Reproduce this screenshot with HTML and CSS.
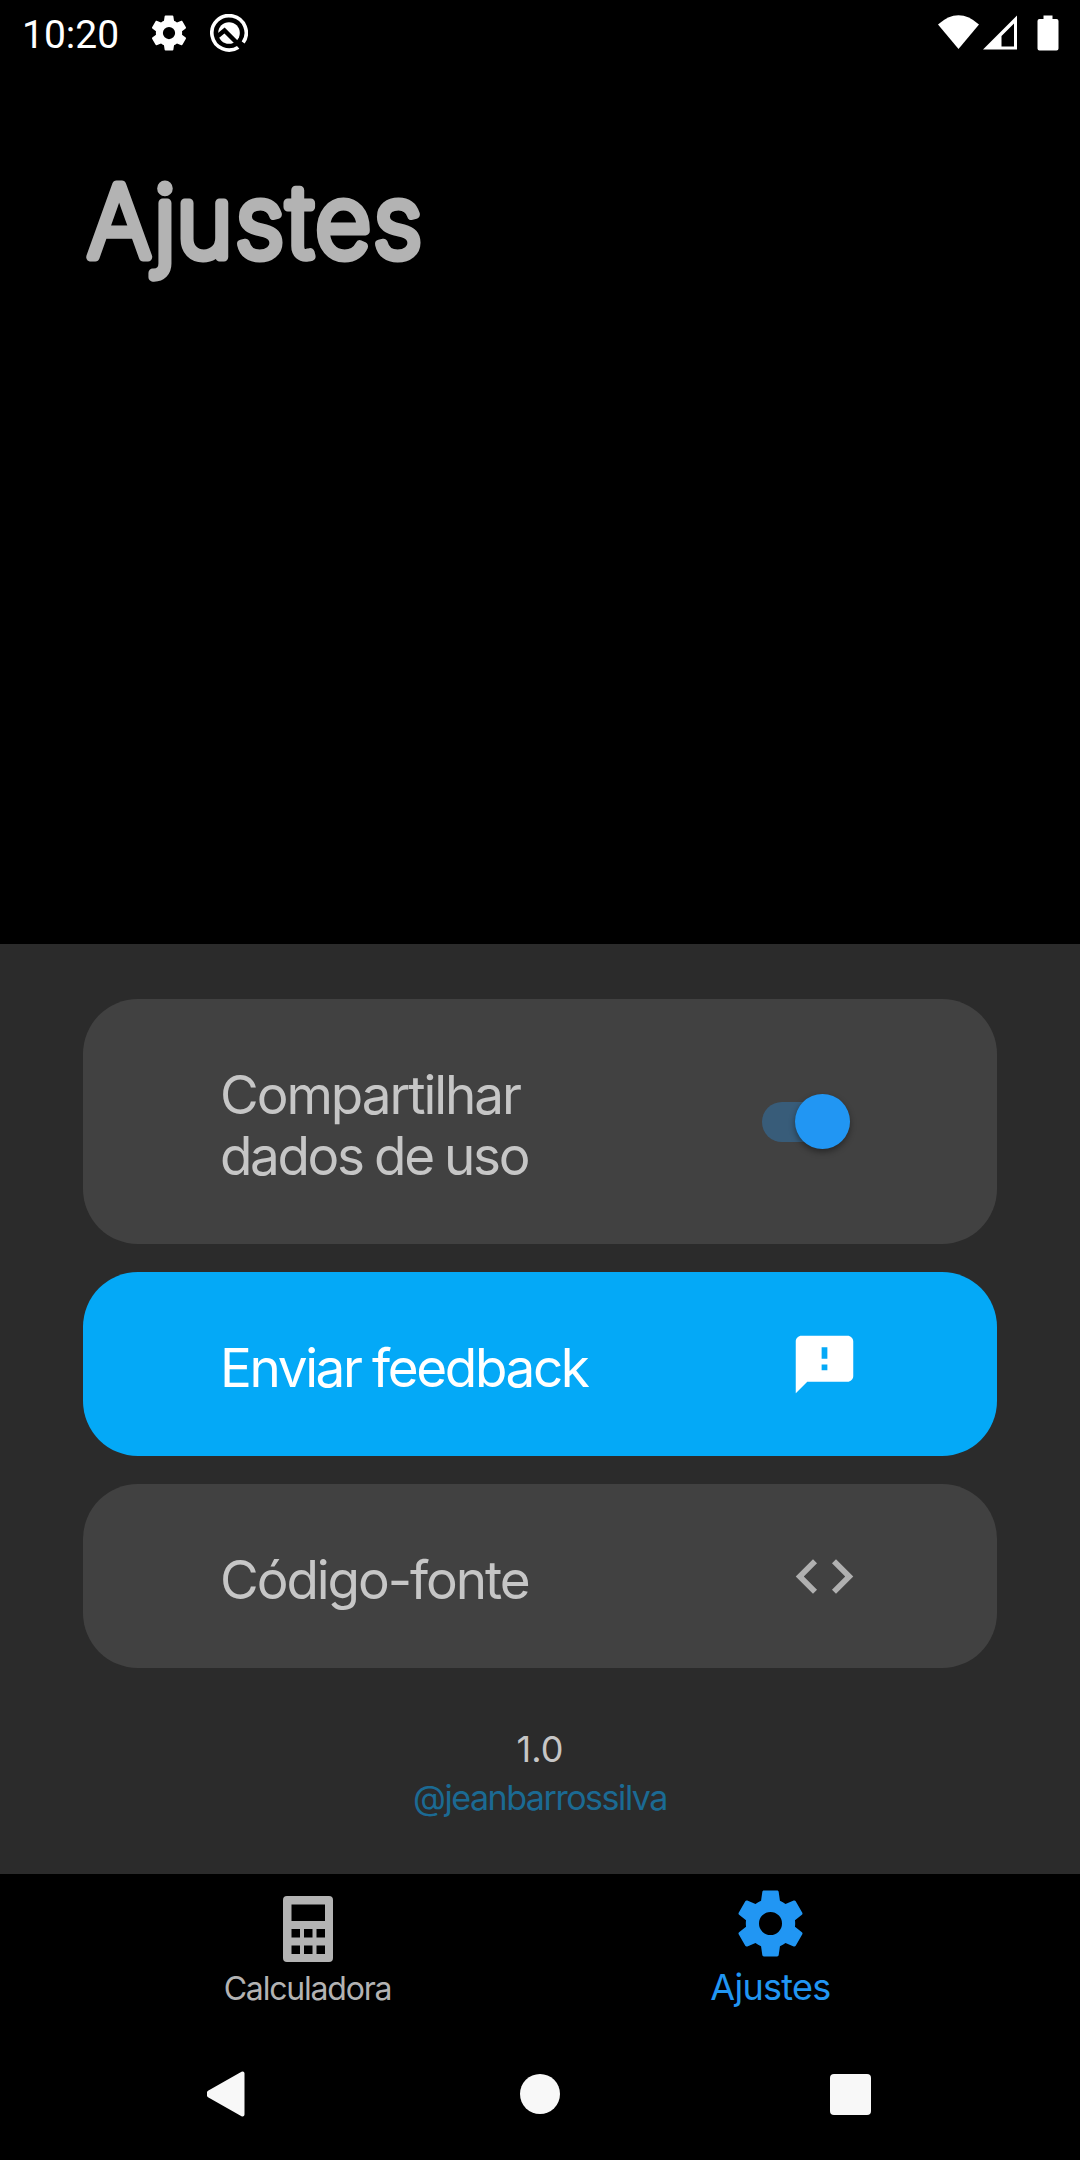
FILE: index.html
```html
<!DOCTYPE html>
<html lang="pt-BR">
<head>
<meta charset="utf-8">
<title>Ajustes</title>
<link rel="stylesheet" href="styles.css">
</head>
<body>
<div class="screen">
  <header class="status">
    <span class="clock">10:20</span>
    <svg class="status-gear" viewBox="0 0 24 24"><path fill-rule="evenodd" d="M19.430 12.980c.04-.32.070-.64.070-.98s-.03-.66-.07-.98l2.110-1.650c.19-.15.240-.42.120-.64l-2-3.460c-.12-.22-.39-.3-.61-.22l-2.490 1c-.52-.4-1.080-.73-1.690-.98l-.38-2.650C14.460 2.180 14.250 2 14 2h-4c-.25 0-.46.180-.49.420l-.38 2.650c-.61.250-1.170.590-1.690.980l-2.490-1c-.23-.09-.49 0-.61.220l-2 3.460c-.13.220-.07.490.120.640l2.110 1.650c-.04.320-.07.650-.07.980s.03.660.070.980l-2.110 1.650c-.19.150-.24.420-.12.640l2 3.460c.12.220.390.300.610.220l2.490-1c.52.400 1.080.730 1.690.980l.38 2.650c.03.240.240.420.490.420h4c.25 0 .46-.18.490-.42l.38-2.650c.61-.25 1.170-.59 1.690-.98l2.490 1c.23.090.490 0 .61-.22l2-3.460c.12-.22.070-.49-.12-.64l-2.110-1.650zM12 15.500a3.500 3.500 0 1 1 0-7 3.500 3.500 0 0 1 0 7z"/></svg>
    <svg class="status-q" viewBox="0 0 38 38"><path class="ring" d="M28.500 33.200A17.200 17.200 0 1 1 33.200 28.600"/><circle cx="19" cy="19" r="10.800"/><path class="cut" d="M6 23.500L14.500 16.500L32 34"/></svg>
    <svg class="status-right" viewBox="0 0 122 36"><path d="M0 9.500Q20.500-9 41 9.500L20.500 34z"/><path fill-rule="evenodd" d="M45 34.500L79 .5V34.500zM76 8.500L63.500 21V31.500H76z"/><path d="M105.500 .5h9v3.500h4q2 0 2 2V33.500q0 2-2 2H101.500q-2 0-2-2V6q0-2 2-2h4z"/></svg>
  </header>
  <h1 class="title"><svg width="360" height="120" viewBox="0 0 360 120"><text y="85" x="1.700 70 93 154.200 207.400 236.700 296.400" transform="scale(.97 1)">Ajustes</text></svg></h1>
  <main class="panel">
    <div class="card tall"><span class="label">Compartilhar<br><span class="spaced">dados de uso</span></span><span class="switch"><span class="thumb"></span></span></div>
    <div class="card accent"><span class="label spaced">Enviar feedback</span><svg class="icon" viewBox="0 0 24 24"><path d="M20 2H4c-1.100 0-2 .9-2 2v18l4-4h14c1.100 0 2-.9 2-2V4c0-1.100-.9-2-2-2zm-7 12h-2v-2h2v2zm0-4h-2V6h2v4z"/></svg></div>
    <div class="card"><span class="label">Código-fonte</span><svg class="icon" viewBox="0 0 24 24"><path d="M9.400 16.600L4.800 12l4.600-4.600L8 6l-6 6 6 6 1.400-1.400zm5.200 0l4.600-4.600-4.600-4.600L16 6l6 6-6 6-1.400-1.400z"/></svg></div>
    <footer class="about"><span class="version">1.0</span><a class="author">@jeanbarrossilva</a></footer>
  </main>
  <nav class="tabs">
    <div class="tab"><svg class="calc" viewBox="0 0 50 66"><path fill-rule="evenodd" d="M4 0H46Q50 0 50 4V62Q50 66 46 66H4Q0 66 0 62V4Q0 0 4 0zM8.500 8.500V25H42V8.500zM8.500 33v8.500H17V33zM21 33v8.500h8.500V33zM33.500 33v8.500H42V33zM8.500 49.500V58H17V49.500zM21 49.500V58h8.500V49.500zM33.500 49.500V58H42V49.500z"/></svg><span class="tab-label">Calculadora</span></div>
    <div class="tab active"><svg class="gear" viewBox="0 0 24 24"><path fill-rule="evenodd" d="M19.430 12.980c.04-.32.070-.64.070-.98s-.03-.66-.07-.98l2.110-1.650c.19-.15.240-.42.120-.64l-2-3.460c-.12-.22-.39-.3-.61-.22l-2.490 1c-.52-.4-1.080-.73-1.690-.98l-.38-2.650C14.460 2.180 14.250 2 14 2h-4c-.25 0-.46.180-.49.420l-.38 2.650c-.61.250-1.170.590-1.690.980l-2.490-1c-.23-.09-.49 0-.61.220l-2 3.460c-.13.220-.07.490.120.640l2.110 1.650c-.04.320-.07.650-.07.980s.03.660.070.980l-2.110 1.650c-.19.150-.24.420-.12.640l2 3.460c.12.220.390.300.610.220l2.490-1c.52.400 1.080.730 1.690.980l.38 2.650c.03.240.240.420.490.420h4c.25 0 .46-.18.490-.42l.38-2.650c.61-.25 1.170-.59 1.690-.98l2.490 1c.23.090.490 0 .61-.22l2-3.460c.12-.22.070-.49-.12-.64l-2.110-1.650zM12 15.500a3.500 3.500 0 1 1 0-7 3.500 3.500 0 0 1 0 7z"/></svg><span class="tab-label">Ajustes</span></div>
  </nav>
  <div class="system">
    <svg class="back" viewBox="0 0 39 46"><path d="M3 21.500L36.500 2.500V43.500L3 24.500z"/></svg>
    <span class="home"></span>
    <span class="recent"></span>
  </div>
</div>
</body>
</html>
```
FILE: styles.css
```css
* { box-sizing: border-box; }
body { margin: 0; background: #000; }
svg { display: block; flex: none; }
.screen {
  width: 1080px;
  height: 2160px;
  display: flex;
  flex-direction: column;
  background: #000;
  font-family: Inter, "Liberation Sans", sans-serif;
  overflow: hidden;
}
.status {
  height: 66px;
  display: flex;
  align-items: center;
  padding: 0 20px 0 22px;
  fill: #fff;
}
.clock {
  width: 125.5px;
  color: #fff;
  font: 39px/46px Roboto, sans-serif;
  padding-top: 3px;
}
.status-gear { width: 42px; height: 42px; }
.status-q { width: 38px; height: 38px; margin-left: 20.5px; }
.ring { fill: none; stroke: #fff; stroke-width: 3.6; }
.cut { fill: none; stroke: #000; stroke-width: 4.4; }
.status-right { width: 122px; height: 36px; margin-left: auto; }
.title {
  margin: 0;
  height: 878px;
  padding: 106px 0 0 86px;
}
.title svg { overflow: visible; }
.title text {
  font-size: 99px;
  font-weight: 200;
  fill: #b3b3b3;
  stroke: #b3b3b3;
  stroke-width: 9px;
  stroke-linejoin: round;
}
.panel {
  height: 930px;
  padding: 55px 83px 0;
  display: flex;
  flex-direction: column;
  gap: 28px;
  background: #2b2b2b;
}
.card {
  height: 184px;
  flex: none;
  border-radius: 55px;
  padding: 0 138px 0 137px;
  display: flex;
  align-items: center;
  justify-content: space-between;
  background: #414141;
  color: #c6c6c6;
  fill: #b0b0b0;
}
.card.tall { height: 245px; }
.card.accent { background: #04a9f7; color: #fff; fill: #fff; }
.label {
  font-size: 53px;
  line-height: 61px;
  padding-top: 8px;
  letter-spacing: -2.05px;
}
.spaced { letter-spacing: -2.35px; word-spacing: -1.2px; }
.icon { width: 69px; height: 69px; }
.switch {
  width: 88px;
  height: 40px;
  margin-right: 9px;
  border-radius: 20px;
  background: #385c79;
  display: flex;
  align-items: center;
  justify-content: flex-end;
}
.thumb {
  flex: none;
  width: 55px;
  height: 55px;
  border-radius: 50%;
  background: #2196f3;
  box-shadow: 0 3px 6px rgba(0, 0, 0, .4);
}
.about {
  display: flex;
  flex-direction: column;
  align-items: center;
  padding-top: 29px;
  font-size: 36px;
  line-height: 48px;
}
.version { color: #c6c6c6; }
.author { margin-top: 1px; color: #1b6a93; font-size: 34px; letter-spacing: -1.45px; }
.tabs {
  height: 176px;
  display: flex;
  padding: 0 78px 0 76px;
}
.tab {
  flex: 1;
  display: flex;
  flex-direction: column;
  align-items: center;
  color: #b3b3b3;
  fill: #b3b3b3;
}
.tab.active { color: #2196f3; fill: #2196f3; }
.calc { width: 50px; height: 66px; margin-top: 22px; }
.gear { width: 79px; height: 79px; margin: 9.5px 0 -.5px; }
.tab-label { font-size: 32px; line-height: 44px; margin-top: 5px; letter-spacing: -1.2px; }
.active .tab-label { font-size: 36px; margin-top: 3px; letter-spacing: -.7px; }
.system {
  height: 88px;
  display: flex;
  align-items: center;
  justify-content: space-between;
  padding: 0 209px 0 206px;
}
.back { width: 39px; height: 46px; fill: #f8f8f8; stroke: #f8f8f8; stroke-width: 4; stroke-linejoin: round; }
.home { width: 40px; height: 40px; margin-left: 5px; border-radius: 50%; background: #f8f8f8; }
.recent { width: 41px; height: 41px; border-radius: 4px; background: #f8f8f8; }
```
